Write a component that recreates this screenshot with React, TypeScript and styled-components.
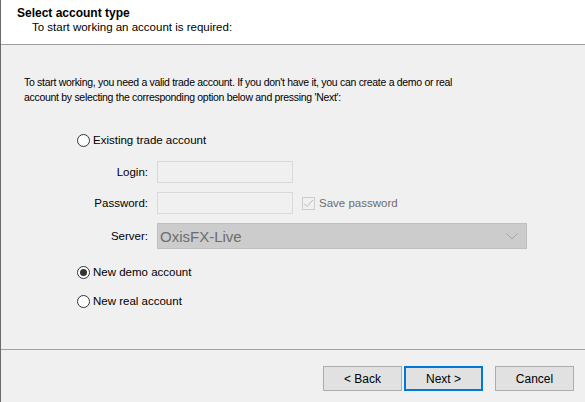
import React from 'react'
import styled, { createGlobalStyle } from 'styled-components'

const GlobalStyle = createGlobalStyle`
  html, body {
    margin: 0;
    padding: 0;
    background: #f0f0f0;
  }
  body {
    font-family: 'Liberation Sans', Arial, sans-serif;
    font-size: 11.5px;
    color: #000;
  }
`

const Window = styled.div`
  width: 584px;
  height: 402px;
  border-left: 1px solid #6b6b6b;
  display: flex;
  flex-direction: column;
  background: #f0f0f0;
`

const Header = styled.div`
  height: 45px;
  box-sizing: border-box;
  background: #fff;
  border-bottom: 1px solid #a0a0a0;
  padding: 6px 0 0 16px;
`

const Title = styled.div`
  font-weight: bold;
  font-size: 12px;
  line-height: 14px;
`

const Subtitle = styled.div`
  margin-left: 15px;
  line-height: 14px;
`

const Body = styled.div`
  flex: 1;
  padding: 30px 0 0 23px;
`

const Intro = styled.p`
  margin: 0;
  font-size: 10.5px;
  letter-spacing: -0.3px;
  line-height: 15px;
  width: 530px;
`

const Options = styled.div`
  margin: 27px 0 0 53px;
  display: flex;
  flex-direction: column;
`

const RadioRow = styled.label<{ $gap?: number }>`
  display: flex;
  align-items: center;
  gap: 3px;
  height: 16px;
  margin-top: ${(p) => p.$gap ?? 0}px;
`

const RadioDot = styled.span<{ $checked?: boolean }>`
  width: 13px;
  height: 13px;
  box-sizing: border-box;
  border-radius: 50%;
  border: 1px solid #333;
  background: #fff;
  display: flex;
  align-items: center;
  justify-content: center;

  &::after {
    content: '';
    width: 7px;
    height: 7px;
    border-radius: 50%;
    background: ${(p) => (p.$checked ? '#333' : 'transparent')};
  }
`

const FieldGrid = styled.div`
  display: grid;
  grid-template-columns: 71px 136px auto;
  column-gap: 9px;
  row-gap: 9px;
  align-items: center;
  margin: 13px 0 0 0;
`

const FieldLabel = styled.span`
  text-align: right;
`

const TextBox = styled.div`
  height: 22px;
  box-sizing: border-box;
  border: 1px solid #d9d9d9;
  background: #f0f0f0;
`

const CheckRow = styled.div`
  display: flex;
  align-items: center;
  gap: 4px;
  color: #6d6d6d;
`

const CheckBox = styled.span`
  width: 13px;
  height: 13px;
  box-sizing: border-box;
  border: 1px solid #cccccc;
  background: #f0f0f0;
  display: flex;
  align-items: center;
  justify-content: center;
`

const Combo = styled.div`
  grid-column: 2 / span 2;
  width: 370px;
  height: 26px;
  box-sizing: border-box;
  border: 1px solid #bfbfbf;
  background: #cccccc;
  color: #6d6d6d;
  font-size: 15px;
  display: flex;
  align-items: center;
  justify-content: space-between;
  padding: 0 8px 0 2px;
`

const Footer = styled.div`
  height: 53px;
  box-sizing: border-box;
  border-top: 1px solid #a0a0a0;
  display: flex;
  justify-content: flex-end;
  align-items: flex-start;
  padding: 16px 11px 0 0;
`

const Button = styled.button<{ $primary?: boolean; $space?: number }>`
  width: 79px;
  height: 25px;
  margin-left: ${(p) => p.$space ?? 0}px;
  box-sizing: border-box;
  border: 1px solid ${(p) => (p.$primary ? '#0078d7' : '#adadad')};
  box-shadow: ${(p) => (p.$primary ? 'inset 0 0 0 1px #0078d7' : 'none')};
  background: #e1e1e1;
  font-family: 'Liberation Sans', Arial, sans-serif;
  font-size: 12px;
  color: #000;
  padding: 0;
`

const Chevron = () => (
  <svg width="12" height="7" viewBox="0 0 12 7">
    <path d="M0.5 0.5 L6 6 L11.5 0.5" fill="none" stroke="#a8a8a8" strokeWidth="1" />
  </svg>
)

const Tick = () => (
  <svg width="11" height="9" viewBox="0 0 11 9">
    <path d="M1 4.5 L4 7.5 L10 1" fill="none" stroke="#bcbcbc" strokeWidth="1" />
  </svg>
)

export default function App() {
  return (
    <>
      <GlobalStyle />
      <Window>
        <Header>
          <Title>Select account type</Title>
          <Subtitle>To start working an account is required:</Subtitle>
        </Header>
        <Body>
          <Intro>
            To start working, you need a valid trade account. If you don't have it, you can create a demo or real
            <br />
            account by selecting the corresponding option below and pressing 'Next':
          </Intro>
          <Options>
            <RadioRow>
              <RadioDot />
              Existing trade account
            </RadioRow>
            <FieldGrid>
              <FieldLabel>Login:</FieldLabel>
              <TextBox />
              <span />
              <FieldLabel>Password:</FieldLabel>
              <TextBox />
              <CheckRow>
                <CheckBox>
                  <Tick />
                </CheckBox>
                Save password
              </CheckRow>
              <FieldLabel>Server:</FieldLabel>
              <Combo>
                OxisFX-Live
                <Chevron />
              </Combo>
            </FieldGrid>
            <RadioRow $gap={15}>
              <RadioDot $checked />
              New demo account
            </RadioRow>
            <RadioRow $gap={13}>
              <RadioDot />
              New real account
            </RadioRow>
          </Options>
        </Body>
        <Footer>
          <Button>&lt; Back</Button>
          <Button $primary $space={2}>Next &gt;</Button>
          <Button $space={12}>Cancel</Button>
        </Footer>
      </Window>
    </>
  )
}
